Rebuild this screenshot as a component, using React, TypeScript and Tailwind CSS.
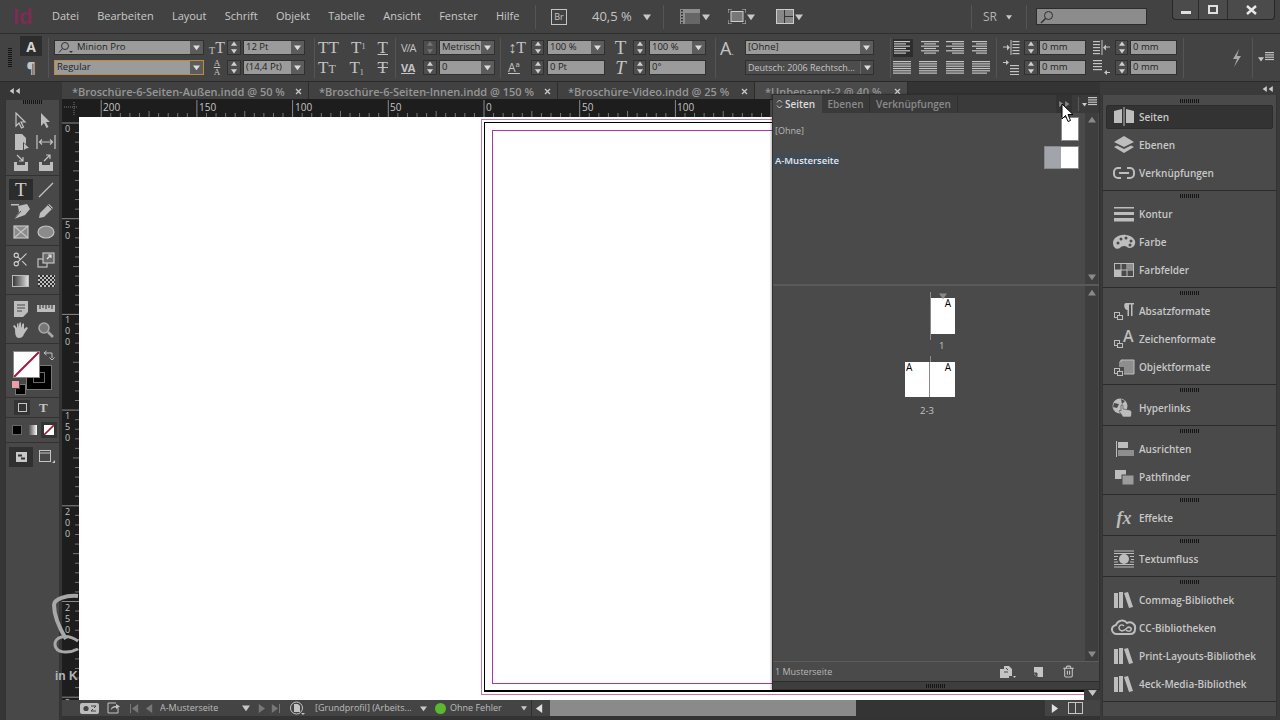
import React from "react";
import { Scissors, Trash2 } from "lucide-react";

const sans = { fontFamily: '"Open Sans", "Liberation Sans", sans-serif' };

type Dir = "up" | "down" | "left" | "right";

const Tri = ({ dir = "down", s = 7, c = "#c8c8c8" }: { dir?: Dir; s?: number; c?: string }) => {
  const pts = { up: "0,8 5,1 10,8", down: "0,2 10,2 5,9", left: "8,0 8,10 1,5", right: "2,0 2,10 9,5" }[dir];
  return (
    <svg width={s} height={s} viewBox="0 0 10 10" className="shrink-0">
      <polygon points={pts} fill={c} />
    </svg>
  );
};

const Grip = () => (
  <svg width="20" height="4" viewBox="0 0 20 4">
    {Array.from({ length: 10 }, (_, i) => (
      <rect key={i} x={i * 2} width="1" height="4" fill="#151515" />
    ))}
  </svg>
);

const Sep = ({ ml }: { ml: string }) => <div className={`${ml} w-px h-[40px] mt-[4px] bg-[#333333] border-r border-[#555555] shrink-0`} />;
const BarSep = ({ ml }: { ml: string }) => <div className={`${ml} w-px h-[24px] bg-[#2f2f2f] border-r border-[#555555] shrink-0`} />;

const Spinner = ({ w = "w-[14px]", dim = false }: { w?: string; dim?: boolean }) => (
  <div className={`${w} h-[15px] bg-[#4e4e4e] border border-[#303030] flex flex-col items-center justify-center gap-px shrink-0`}>
    <Tri dir="up" s={6} c={dim ? "#777777" : "#d0d0d0"} />
    <Tri dir="down" s={6} c={dim ? "#777777" : "#d0d0d0"} />
  </div>
);

const Field = ({ w, text, drop = true, tone = "plain" }: { w: string; text: string; drop?: boolean; tone?: "plain" | "dark" | "focus" }) => {
  const look = {
    plain: "bg-[#9b9b9b] border-[#303030] text-[#222222] text-[9.5px]",
    focus: "bg-[#9b9b9b] border-[#c08a3c] text-[#222222] text-[9.5px]",
    dark: "bg-[#4c4c4c] border-[#303030] text-[#c4c4c4] text-[9px]",
  }[tone];
  return (
    <div className={`${w} h-[15px] border flex items-center shrink-0 ${look}`}>
      <span className="flex-1 pl-[2px] whitespace-nowrap">{text}</span>
      {drop && (
        <span className={`w-[13px] h-full flex items-center justify-center shrink-0 ${tone === "dark" ? "bg-[#4c4c4c] border-l border-[#666666]" : "bg-[#5c5c5c]"}`}>
          <Tri s={7} c="#dddddd" />
        </span>
      )}
    </div>
  );
};

const Glyph = ({ children, size = "text-[17px]", className = "" }: { children: React.ReactNode; size?: string; className?: string }) => (
  <span className={`${size} leading-none text-[#c4c4c4] whitespace-nowrap ${className}`} style={{ fontFamily: '"Liberation Serif", serif' }}>
    {children}
  </span>
);

const Lines = ({ rows, w = 18 }: { rows: number[][]; w?: number }) => (
  <svg width={w} height="14" viewBox={`0 0 ${w} 14`} className="shrink-0">
    {rows.map(([a, b], i) => (
      <rect key={i} x={a} y={i * 2.3} width={b - a} height="1.2" fill="#c4c4c4" />
    ))}
  </svg>
);

const MenuBar = () => (
  <div className="h-[34px] shrink-0 bg-[#424242] flex items-center relative border-b border-[#2e2e2e]">
    <span className="ml-[13px] w-[39px] shrink-0 text-[22px] font-bold leading-none text-[#7c2c55]" style={{ fontFamily: '"Liberation Sans", sans-serif' }}>
      Id
    </span>
    <nav className="flex gap-[18.25px] text-[11px] text-[#c9c9c9] w-[483px] shrink-0">
      {["Datei", "Bearbeiten", "Layout", "Schrift", "Objekt", "Tabelle", "Ansicht", "Fenster", "Hilfe"].map((m) => (
        <span key={m}>{m}</span>
      ))}
    </nav>
    <BarSep ml="ml-0" />
    <div className="ml-[15px] w-[16px] h-[16px] shrink-0 border border-[#c4c4c4] text-[9px] flex items-center justify-center text-[#c4c4c4]">Br</div>
    <span className="ml-[25px] w-[40px] shrink-0 text-[13px] text-[#c4c4c4] whitespace-nowrap">40,5 %</span>
    <span className="ml-[11px]"><Tri s={8} /></span>
    <BarSep ml="ml-[12px]" />
    <svg width="20" height="15" viewBox="0 0 20 15" className="ml-[16px] shrink-0">
      <rect width="20" height="15" fill="#8e8e8e" />
      <rect x="5" y="4" width="15" height="11" fill="#666666" />
      {[1, 4, 7, 10, 13].map((y) => <rect key={y} x="1" y={y} width="2" height="1.5" fill="#333333" />)}
    </svg>
    <span className="ml-[2px]"><Tri s={8} /></span>
    <svg width="18" height="15" viewBox="0 0 18 15" className="ml-[18px] shrink-0">
      <path d="M0 4V0H4M14 0H18V4M18 11V15H14M4 15H0V11" stroke="#c4c4c4" fill="none" />
      <rect x="3" y="2.5" width="12" height="10" fill="#777777" stroke="#cccccc" />
    </svg>
    <span className="ml-[1px]"><Tri s={8} /></span>
    <svg width="18" height="15" viewBox="0 0 18 15" className="ml-[21px] shrink-0">
      <rect x=".5" y=".5" width="17" height="14" fill="#888888" stroke="#cccccc" />
      <path d="M8.5 1V14M9 7.5H17" stroke="#333333" />
    </svg>
    <span className="ml-[1px]"><Tri s={8} /></span>
    <BarSep ml="ml-[168px]" />
    <span className="ml-[11px] text-[12px] text-[#b4b4b4] w-[23px] shrink-0">SR</span>
    <Tri s={6} />
    <BarSep ml="ml-[14px]" />
    <div className="ml-[9px] w-[111px] h-[17px] shrink-0 bg-[#8c8c8c] border border-[#2c2c2c] flex items-center pl-[3px]">
      <svg width="14" height="14" viewBox="0 0 14 14">
        <circle cx="8.5" cy="5.5" r="4" fill="none" stroke="#2e2e2e" />
        <path d="M5.5 8.5L1 13" stroke="#2e2e2e" strokeWidth="1.4" />
      </svg>
    </div>
    <div className="ml-[25px] self-start h-[20px] flex shrink-0 bg-[#4b4b4b] border border-t-0 border-[#262626] rounded-b-[4px]">
      <div className="w-[26px] flex items-center justify-center border-r border-[#2c2c2c]"><div className="w-[10px] h-[3px] mt-[6px] bg-[#e0e0e0]" /></div>
      <div className="w-[29px] flex items-center justify-center border-r border-[#2c2c2c]"><div className="w-[10px] h-[9px] border-2 border-[#e0e0e0]" /></div>
      <div className="w-[46px] flex items-center justify-center">
        <svg width="11" height="10" viewBox="0 0 11 10"><path d="M1 1L10 9M10 1L1 9" stroke="#e8e8e8" strokeWidth="2.4" /></svg>
      </div>
    </div>
  </div>
);

const Row = ({ children }: { children: React.ReactNode }) => <div className="flex items-center h-[15px]">{children}</div>;
const Col = ({ children, className = "" }: { children: React.ReactNode; className?: string }) => (
  <div className={`flex flex-col gap-[5px] pt-[6px] shrink-0 ${className}`}>{children}</div>
);

const Indent = ({ kind }: { kind: "left" | "right" | "first" | "last" }) => (
  <svg width="17" height="15" viewBox="0 0 17 15" className="shrink-0" fill="#c4c4c4">
    {kind === "left" && <>
      <path d="M8 0V15" stroke="#c4c4c4" />
      {[1, 4, 7, 10, 13].map((y) => <rect key={y} x="9.5" y={y} width="7" height="1.2" />)}
      <path d="M0 7H5" stroke="#c4c4c4" /><polygon points="4,4.5 7,7.5 4,10.5" />
    </>}
    {kind === "right" && <>
      <path d="M9 0V15" stroke="#c4c4c4" />
      {[1, 4, 7, 10, 13].map((y) => <rect key={y} x="0" y={y} width="7" height="1.2" />)}
      <path d="M12 7H17" stroke="#c4c4c4" /><polygon points="13,4.5 10,7.5 13,10.5" />
    </>}
    {kind === "first" && <>
      {[5, 8, 11, 14].map((y) => <rect key={y} x="7" y={y} width="9" height="1.2" />)}
      <path d="M0 2.5H4" stroke="#c4c4c4" /><polygon points="3,0 6,2.5 3,5" />
    </>}
    {kind === "last" && <>
      {[0, 3, 6, 9].map((y) => <rect key={y} x="0" y={y} width="9" height="1.2" />)}
      <path d="M13 12.5H17" stroke="#c4c4c4" /><polygon points="14,10 11,12.5 14,15" />
    </>}
  </svg>
);

const ControlBar = () => (
  <div className="h-[48px] shrink-0 bg-[#434343] border-b border-[#2a2a2a] flex text-[#c4c4c4]" style={sans}>
    <div className="ml-[8px] w-[12px] shrink-0 pt-[14px]">
      <div className="w-[4px] h-[20px] bg-[repeating-linear-gradient(#151515_0_1px,transparent_1px_2px)]" />
    </div>
    <div className="w-[22px] shrink-0 pt-[2px] flex flex-col items-center">
      <div className="w-[22px] h-[20px] bg-[#2d2d2d] flex items-center justify-center text-[14px] font-bold text-[#d4d4d4]">A</div>
      <div className="mt-[3px] text-[14px] font-bold leading-none text-[#c4c4c4] pt-[2px]">¶</div>
    </div>
    <Sep ml="ml-[6px]" />
    <Col className="ml-[5px] w-[150px]">
      <div className="h-[15px] bg-[#9b9b9b] border border-[#303030] flex items-center text-[9.5px] text-[#222222]">
        <svg width="18" height="13" viewBox="0 0 18 13" className="ml-[2px]">
          <circle cx="8" cy="5" r="3.5" fill="none" stroke="#333333" />
          <path d="M5.5 7.5L2 11.5" stroke="#333333" />
          <polygon points="12,10 16,10 14,12" fill="#333333" />
        </svg>
        <span className="flex-1 pl-[2px]">Minion Pro</span>
        <span className="w-[13px] h-full bg-[#5c5c5c] flex items-center justify-center"><Tri s={7} c="#dddddd" /></span>
      </div>
      <Field w="w-[150px]" text="Regular" tone="focus" />
    </Col>
    <Col className="ml-[5px]">
      <Row><span className="w-[16px] flex justify-center items-end"><Glyph size="text-[10px]">T</Glyph><Glyph size="text-[16px]">T</Glyph></span><span className="ml-[2px]"><Spinner /></span><Field w="w-[62px] ml-[2px]" text="12 Pt" /></Row>
      <Row><span className="w-[16px] flex flex-col items-center"><Glyph size="text-[9px]" className="underline">A</Glyph><Glyph size="text-[9px]">A</Glyph></span><span className="ml-[2px]"><Spinner /></span><Field w="w-[62px] ml-[2px]" text="(14,4 Pt)" /></Row>
    </Col>
    <Sep ml="ml-[9px]" />
    <Col className="ml-[3px] w-[70px]">
      <Row><div className="flex justify-between w-full"><Glyph>TT</Glyph><Glyph>T<sup className="text-[8px]">1</sup></Glyph><Glyph className="underline">T</Glyph></div></Row>
      <Row><div className="flex justify-between w-full"><Glyph>T<span className="text-[12px]">T</span></Glyph><Glyph>T<sub className="text-[8px]">1</sub></Glyph><Glyph className="line-through">T</Glyph></div></Row>
    </Col>
    <Sep ml="ml-[7px]" />
    <Col className="ml-[5px]">
      <Row><span className="w-[18px] text-[11px] leading-none tracking-[-1px] whitespace-nowrap">V/A</span><span className="ml-[4px]"><Spinner dim /></span><Field w="w-[56px] ml-[2px]" text="Metrisch" /></Row>
      <Row><span className="w-[18px] text-[11px] font-bold leading-none underline tracking-[-0.5px]">VA</span><span className="ml-[4px]"><Spinner /></span><Field w="w-[56px] ml-[2px]" text="0" /></Row>
    </Col>
    <Sep ml="ml-[5px]" />
    <Col className="ml-[7px]">
      <Row>
        <span className="w-[18px] flex justify-end"><Glyph size="text-[16px]">↕T</Glyph></span><span className="ml-[5px]"><Spinner w="w-[13px]" /></span><Field w="w-[58px] ml-[3px]" text="100 %" />
        <span className="ml-[6px] w-[19px] flex justify-center"><Glyph size="text-[19px]">T</Glyph></span><span className="ml-[3px]"><Spinner w="w-[13px]" /></span><Field w="w-[57px] ml-[3px]" text="100 %" />
      </Row>
      <Row>
        <span className="w-[18px] text-[12px] leading-none underline">Aª</span><span className="ml-[5px]"><Spinner w="w-[13px]" /></span><Field w="w-[58px] ml-[3px]" text="0 Pt" drop={false} />
        <span className="ml-[6px] w-[19px] flex justify-center"><Glyph size="text-[19px]" className="italic">T</Glyph></span><span className="ml-[3px]"><Spinner w="w-[13px]" /></span><Field w="w-[57px] ml-[3px]" text="0°" drop={false} />
      </Row>
    </Col>
    <Sep ml="ml-[9px]" />
    <Col className="ml-[4px]">
      <Row><span className="w-[22px] text-[18px] leading-none">A<span className="text-[9px]">.</span></span><Field w="w-[129px] ml-[3px]" text="[Ohne]" /></Row>
      <Row><span className="w-[22px]" /><Field w="w-[129px] ml-[3px]" text="Deutsch: 2006 Rechtsch..." tone="dark" /></Row>
    </Col>
    <Sep ml="ml-[16px]" />
    <Col className="ml-[2px] w-[97px]">
      <Row>
        <div className="flex justify-between items-center w-full">
          <div className="bg-[#2d2d2d] px-[1px] py-[2px] -my-[2px]"><Lines rows={[[0, 16], [0, 12], [0, 16], [0, 12], [0, 16], [0, 12]]} /></div>
          <Lines rows={[[0, 18], [3, 15], [0, 18], [3, 15], [0, 18], [3, 15]]} />
          <Lines rows={[[0, 18], [6, 18], [0, 18], [6, 18], [0, 18], [6, 18]]} />
          <Lines rows={[[0, 15], [4, 15], [0, 15], [4, 15], [0, 15], [4, 15]]} />
        </div>
      </Row>
      <Row>
        <div className="flex justify-between items-center w-full">
          {[0, 1, 2, 3].map((i) => <Lines key={i} rows={[[0, 18], [0, 18], [0, 18], [0, 18], [0, 18], [0, i === 3 ? 15 : 18]]} />)}
        </div>
      </Row>
    </Col>
    <Sep ml="ml-[6px]" />
    <Col className="ml-[6px]">
      <Row><Indent kind="left" /><span className="ml-[4px]"><Spinner /></span><Field w="w-[47px] ml-[1px]" text="0 mm" drop={false} /><span className="ml-[7px]"><Indent kind="right" /></span><span className="ml-[5px]"><Spinner w="w-[13px]" /></span><Field w="w-[47px] ml-[2px]" text="0 mm" drop={false} /></Row>
      <Row><Indent kind="first" /><span className="ml-[4px]"><Spinner /></span><Field w="w-[47px] ml-[1px]" text="0 mm" drop={false} /><span className="ml-[7px]"><Indent kind="last" /></span><span className="ml-[5px]"><Spinner w="w-[13px]" /></span><Field w="w-[47px] ml-[2px]" text="0 mm" drop={false} /></Row>
    </Col>
    <Sep ml="ml-[6px]" />
    <svg width="12" height="20" viewBox="0 0 12 20" className="ml-[47px] mt-[14px] shrink-0">
      <path d="M8 1L2 11H6L3 19L10 8H6Z" fill="#a8a8a8" />
    </svg>
    <Sep ml="ml-[9px]" />
    <div className="ml-[5px] mt-[18px] flex items-center gap-[1px] shrink-0 h-[14px]">
      <Tri s={6} />
      <Lines w={9} rows={[[0, 9], [0, 9], [0, 9], [0, 9]]} />
    </div>
  </div>
);

const Tool = ({ children, active = false }: { children: React.ReactNode; active?: boolean }) => (
  <div className={`h-[21px] w-[24px] flex items-center justify-center ${active ? "bg-[#2c2c2c]" : ""}`}>{children}</div>
);

const ToolSvg = ({ children, filled = false }: { children: React.ReactNode; filled?: boolean }) => (
  <svg width="20" height="18" viewBox="0 0 20 18" fill={filled ? "#bdbdbd" : "none"} stroke={filled ? "none" : "#c4c4c4"} strokeWidth="1.2">
    {children}
  </svg>
);

const ToolGroup = ({ children, pb = "pb-[3px]" }: { children: React.ReactNode; pb?: string }) => (
  <div className={`grid grid-cols-2 justify-items-center pl-[2px] pt-[3px] ${pb} border-b border-[#323232]`}>{children}</div>
);

const ToolPanel = () => (
  <div className="w-[62px] shrink-0 h-full flex flex-col bg-[#363636]">
    <div className="h-[18px] flex items-center pl-[9px] gap-0">
      <Tri dir="left" s={6} /><Tri dir="left" s={6} />
    </div>
    <div className="flex-1 ml-[5px] w-[55px] bg-[#484848] border-x border-[#333333] flex flex-col">
      <div className="h-[7px] flex justify-center"><Grip /></div>
      <ToolGroup pb="pb-[2px]">
        <Tool><ToolSvg><path d="M5 1V14L8 11L10.5 16L12.5 15L10 10H14Z" /></ToolSvg></Tool>
        <Tool><ToolSvg filled><path d="M5 1V14L8 11L10.5 16L12.5 15L10 10H14Z" /></ToolSvg></Tool>
        <Tool><ToolSvg filled><path d="M4 1H11L15 5V11L12 9V17H4Z" /><path d="M13 10V17L15 15.5L18 15Z" /></ToolSvg></Tool>
        <Tool><ToolSvg><path d="M1 2V16M19 2V16" /><path d="M3.5 9H16.5M6 6.5L3.5 9L6 11.5M14 6.5L16.5 9L14 11.5" /></ToolSvg></Tool>
        <Tool><ToolSvg><path d="M3 8V17H17V8H14V11H6V8Z" fill="#bdbdbd" stroke="none" /><path d="M6 1L12 7M12 3V7H8" /></ToolSvg></Tool>
        <Tool><ToolSvg><path d="M3 8V17H17V8H14V11H6V8Z" fill="#bdbdbd" stroke="none" /><path d="M8 7L14 1M10 1H14V5" /></ToolSvg></Tool>
      </ToolGroup>
      <ToolGroup>
        <Tool active><Glyph size="text-[19px]" className="text-[#d0d0d0]">T</Glyph></Tool>
        <Tool><ToolSvg><path d="M3 16L17 2" /></ToolSvg></Tool>
        <Tool><ToolSvg filled><path d="M0 2H8V3.5H0Z" /><path d="M7 4L16 2L19 7L14 13L3 17L8 10Z" /><path d="M3 17L10 9" stroke="#484848" fill="none" strokeWidth="1" /></ToolSvg></Tool>
        <Tool><ToolSvg filled><path d="M13 2L17 6L8 15L3 16L4 11Z" /><path d="M12 3L16 7" stroke="#484848" fill="none" strokeWidth="1" /></ToolSvg></Tool>
        <Tool><ToolSvg><rect x="3" y="3" width="14" height="12" fill="#8b8b8b" /><path d="M3 3L17 15M17 3L3 15" /></ToolSvg></Tool>
        <Tool><ToolSvg filled><ellipse cx="10" cy="9" rx="8" ry="6" fill="#8b8b8b" stroke="#c4c4c4" /></ToolSvg></Tool>
      </ToolGroup>
      <ToolGroup>
        <Tool><Scissors size={17} color="#d0d0d0" strokeWidth={1.5} /></Tool>
        <Tool><ToolSvg><rect x="2" y="8" width="9" height="8" /><rect x="7" y="2" width="11" height="10" fill="#6a6a6a" /><path d="M11 8L15 4M12 4H15V7" stroke="#e0e0e0" /></ToolSvg></Tool>
        <Tool><div className="w-[17px] h-[12px] border border-[#bbbbbb] bg-gradient-to-r from-[#3a3a3a] to-[#e0e0e0]" /></Tool>
        <Tool><div className="w-[17px] h-[12px] bg-[conic-gradient(#2f2f2f_25%,#bdbdbd_0_50%,#2f2f2f_0_75%,#bdbdbd_0)] bg-[length:4px_4px]" /></Tool>
      </ToolGroup>
      <ToolGroup>
        <Tool><ToolSvg filled><path d="M3 1H17V12L12 17H3Z" /><path d="M6 5H14M6 8H14M6 11H11" stroke="#484848" fill="none" strokeWidth="1.2" /></ToolSvg></Tool>
        <Tool><ToolSvg filled><path d="M1 5H19V12H1Z" /><path d="M4 5V9M7 5V8M10 5V9M13 5V8M16 5V9" stroke="#484848" fill="none" /></ToolSvg></Tool>
        <Tool><ToolSvg filled><path d="M4 8L2 5L3.5 4L6 7V2.5H7.5V7L8.5 1.5H10V7L11.5 2.5H13V8L15.5 6L17 7L13 13C12 16 10 17 8 17C5 17 4 14 4 8Z" /></ToolSvg></Tool>
        <Tool><ToolSvg><circle cx="8" cy="7" r="5" fill="#777777" stroke="#a8a8a8" strokeWidth="1.6" /><path d="M12 11L17 16" stroke="#a8a8a8" strokeWidth="2.6" /></ToolSvg></Tool>
      </ToolGroup>
      <div className="h-[54px] relative border-b border-[#323232]">
        <div className="absolute left-[20px] top-[21px] w-[26px] h-[25px] bg-black border border-[#777777] flex items-center justify-center">
          <div className="w-[12px] h-[11px] border border-[#6a6a6a]" />
        </div>
        <div className="absolute left-[7px] top-[7px] w-[27px] h-[27px] border-[1px] border-[#888888] bg-white overflow-hidden">
          <svg width="25" height="25" viewBox="0 0 25 25"><path d="M0 25L25 0" stroke="#a01c3c" strokeWidth="2" /></svg>
        </div>
        <svg width="12" height="12" viewBox="0 0 12 12" className="absolute left-[37px] top-[6px]">
          <path d="M1 3H9V8M1 3L3.5 1M1 3L3.5 5M9 10L6.5 7.5M9 10L11.5 7.5" stroke="#c4c4c4" fill="none" />
        </svg>
        <div className="absolute left-[9px] top-[40px] w-[11px] h-[11px] bg-black border border-[#777777]" />
        <div className="absolute left-[5px] top-[36px] w-[9px] h-[9px] bg-[#e8a0a8] border border-[#444444]" />
      </div>
      <div className="h-[20px] flex items-center border-b border-[#323232]">
        <div className="ml-[8px] w-[16px] h-[15px] bg-[#343434] flex items-center justify-center"><div className="w-[9px] h-[9px] border border-[#c4c4c4]" /></div>
        <span className="ml-[9px] text-[13px] font-bold text-[#c4c4c4]" style={{ fontFamily: '"Liberation Serif", serif' }}>T</span>
      </div>
      <div className="h-[25px] flex items-center border-b border-[#323232]">
        <div className="ml-[6px] w-[10px] h-[10px] bg-black border border-[#666666]" />
        <div className="ml-[7px] w-[8px] h-[10px] bg-gradient-to-r from-[#555555] to-white" />
        <div className="ml-[4px] w-[16px] h-[16px] bg-[#343434] flex items-center justify-center">
          <div className="w-[10px] h-[10px] bg-white overflow-hidden">
            <svg width="10" height="10" viewBox="0 0 10 10"><path d="M0 10L10 0" stroke="#a01c3c" strokeWidth="1.6" /></svg>
          </div>
        </div>
      </div>
      <div className="mt-[4px] h-[20px] flex items-center">
        <div className="ml-[3px] w-[24px] h-[20px] bg-[#303030] flex items-center justify-center">
          <svg width="11" height="10" viewBox="0 0 11 10"><rect width="11" height="10" fill="#c8c8c8" /><rect x="2" y="2.5" width="4" height="2" fill="#333333" /><rect x="5" y="5.5" width="4" height="2" fill="#333333" /></svg>
        </div>
        <svg width="16" height="14" viewBox="0 0 16 14" className="ml-[6px]"><rect x=".5" y=".5" width="11" height="11" fill="none" stroke="#c4c4c4" /><path d="M1 3H11" stroke="#c4c4c4" /><polygon points="13,13 16,13 16,10" fill="#c4c4c4" /></svg>
      </div>
    </div>
  </div>
);

const tabs = [
  { t: "*Broschüre-6-Seiten-Außen.indd @ 50 %", w: "w-[247px]" },
  { t: "*Broschüre-6-Seiten-Innen.indd @ 150 %", w: "w-[249px]" },
  { t: "*Broschüre-Video.indd @ 25 %", w: "w-[197px]" },
  { t: "*Unbenannt-2 @ 40 %", w: "w-[153px]" },
];

const TabBar = () => (
  <div className="h-[18px] shrink-0 flex bg-[#343434] border-b border-[#1e1e1e]">
    {tabs.map((tab, i) => (
      <div key={tab.t} className={`${tab.w} flex items-center justify-between pt-[2px] pl-[10px] pr-[6px] border-r border-[#2c2c2c] ${i === 3 ? "bg-[#4a4a4a]" : "bg-[#414141]"}`}>
        <span className="text-[11px] font-semibold text-[#969696] whitespace-nowrap leading-none">{tab.t}</span>
        <svg width="7" height="7" viewBox="0 0 7 7"><path d="M1 1L6 6M6 1L1 6" stroke="#c8c8c8" strokeWidth="1.3" /></svg>
      </div>
    ))}
  </div>
);

const STEP = 95.7 / 10;

const HRuler = () => (
  <svg width="1005" height="17" viewBox="0 0 1005 17" className="block shrink-0">
    <rect width="1005" height="17" fill="#1d1d1d" />
    {Array.from({ length: 105 }, (_, i) => {
      const x = 405 + (i - 40) * STEP;
      const major = (i - 40) % 10 === 0;
      const mid = (i - 40) % 5 === 0;
      return <line key={i} x1={x} x2={x} y1={major ? 0 : mid ? 11 : 13} y2={17} stroke={major ? "#8a8a8a" : "#777777"} />;
    })}
    {[
      [23, "200"], [119, "150"], [215, "100"], [310, "50"], [406, "0"], [502, "50"], [597, "100"],
    ].map(([x, l]) => (
      <text key={String(x)} x={Number(x) + 1} y="11" fontSize="10" fill="#c4c4c4" fontFamily="Open Sans, sans-serif">{l}</text>
    ))}
  </svg>
);

const VRuler = () => (
  <svg width="17" height="583" viewBox="0 0 17 583" className="block shrink-0">
    <rect width="17" height="583" fill="#1d1d1d" />
    {Array.from({ length: 61 }, (_, i) => {
      const y = 6 + i * STEP;
      const major = i % 10 === 0;
      const mid = i % 5 === 0;
      return <line key={i} y1={y} y2={y} x1={major ? 0 : mid ? 11 : 13} x2={17} stroke={major ? "#8a8a8a" : "#777777"} />;
    })}
    {["0", "50", "100", "150", "200", "250", "300"].map((l, i) =>
      l.split("").map((d, k) => (
        <text key={l + k} x="3" y={15 + i * 95.7 + k * 11} fontSize="9" fill="#c4c4c4" fontFamily="Open Sans, sans-serif">{d}</text>
      ))
    )}
  </svg>
);

const Canvas = () => (
  <div className="flex-1 min-w-0 bg-white overflow-hidden pt-[2px] pl-[402px]">
    <div className="w-[800px] h-[576px] border border-[#c478a8] p-[2px]">
      <div className="w-full h-[570px] border border-black border-b-2 p-[7px]">
        <div className="w-full h-[554px] border border-[#a838a8]" />
      </div>
    </div>
  </div>
);

const VScroll = () => (
  <div className="w-[16px] shrink-0 bg-[#3c3c3c] flex flex-col items-center justify-end pb-[3px]">
    <Tri s={9} />
  </div>
);

const StatusBar = () => (
  <div className="h-[16px] shrink-0 bg-[#444444] flex items-center text-[9px] text-[#bdbdbd]">
    <svg width="19" height="11" viewBox="0 0 19 11" className="ml-[18px] shrink-0">
      <rect width="19" height="11" rx="2" fill="#bdbdbd" />
      <circle cx="6" cy="5.5" r="2.6" fill="#444444" />
      <path d="M11 3H16L14 5M16 8H11L13 6" stroke="#444444" fill="none" />
    </svg>
    <svg width="13" height="12" viewBox="0 0 13 12" className="ml-[8px] shrink-0">
      <path d="M9 1H1V11H11V6" stroke="#c4c4c4" fill="none" />
      <path d="M4 8C4 5 6 4 9 4V2L13 4.5L9 7V5.5C7 5.5 5 6 4 8Z" fill="#c4c4c4" />
    </svg>
    <span className="ml-[10px] flex items-center"><span className="w-px h-[9px] bg-[#777777]" /><Tri dir="left" s={9} c="#777777" /></span>
    <span className="ml-[5px]"><Tri dir="left" s={9} c="#777777" /></span>
    <span className="ml-[6px] w-[82px] whitespace-nowrap shrink-0">A-Musterseite</span>
    <Tri s={8} />
    <span className="ml-[7px]"><Tri dir="right" s={9} c="#777777" /></span>
    <span className="ml-[4px] flex items-center"><Tri dir="right" s={9} c="#777777" /><span className="w-px h-[9px] bg-[#777777]" /></span>
    <svg width="15" height="14" viewBox="0 0 15 14" className="ml-[10px] shrink-0">
      <circle cx="6.5" cy="7" r="6" fill="none" stroke="#c4c4c4" />
      <path d="M4 3H8L10 5V11H4Z" fill="#c4c4c4" />
      <polygon points="11,12 15,12 13,14" fill="#c4c4c4" />
    </svg>
    <span className="ml-[10px] w-[105px] whitespace-nowrap shrink-0">[Grundprofil] (Arbeits...</span>
    <Tri s={7} />
    <span className="ml-[8px] w-[11px] h-[11px] rounded-full bg-[#5cb82e] shrink-0" />
    <span className="ml-[4px] w-[71px] whitespace-nowrap shrink-0">Ohne Fehler</span>
    <Tri s={6} />
    <div className="ml-[4px] h-full flex-1 flex items-center border-l border-[#2e2e2e]">
      <span className="w-[18px] pl-[3px] flex"><Tri dir="left" s={9} c="#e0e0e0" /></span>
      <div className="w-[306px] h-full bg-[#8a8a8a]" />
      <div className="w-[189px] h-full bg-[#343434]" />
      <span className="w-[19px] flex justify-center"><Tri dir="right" s={9} c="#e0e0e0" /></span>
      <div className="ml-[4px] w-[15px] h-[12px] border border-[#c4c4c4] flex"><div className="w-1/2 h-full border-r border-[#c4c4c4]" /></div>
    </div>
    <div className="w-[18px]" />
  </div>
);

const PanelScroll = () => (
  <div className="w-[13px] h-full bg-[#3e3e3e] flex flex-col items-center justify-between py-[3px] shrink-0">
    <Tri dir="up" s={8} c="#8a8a8a" />
    <Tri s={8} c="#8a8a8a" />
  </div>
);

const PagesPanel = () => (
  <div className="absolute left-[710px] top-[12px] w-[328px] h-[596px] bg-[#4a4a4a] border border-[#303030] flex flex-col shadow-[-1px_0_2px_rgba(0,0,0,0.3)]">
    <div className="h-[18px] shrink-0 bg-[#3a3a3a] flex items-stretch text-[10px] font-semibold text-[#8a8a8a]">
      <div className="w-[49px] bg-[#4a4a4a] flex items-center pl-[3px] text-[#dcdcdc]">
        <svg width="7" height="10" viewBox="0 0 7 10" className="mr-[2px]"><path d="M1 3.5L3.5 1L6 3.5M1 6.5L3.5 9L6 6.5" stroke="#c8c8c8" fill="none" /></svg>
        Seiten
      </div>
      <div className="w-[48px] flex items-center justify-center border-r border-[#2e2e2e]">Ebenen</div>
      <div className="w-[88px] flex items-center justify-center border-r border-[#2e2e2e]">Verknüpfungen</div>
      <div className="flex-1" />
      <div className="w-[16px] bg-[#333333] flex items-center justify-center"><Tri dir="right" s={6} c="#8a8a8a" /><Tri dir="right" s={6} c="#8a8a8a" /></div>
      <div className="ml-[6px] w-px my-[2px] bg-[#5a5a5a]" />
      <div className="w-[20px] flex items-center justify-center gap-[1px]"><Tri s={5} /><Lines w={9} rows={[[0, 9], [0, 9], [0, 9], [0, 9]]} /></div>
    </div>
    <div className="h-[173px] shrink-0 flex border-b-2 border-[#5a5a5a]">
      <div className="flex-1 relative pt-[4px] pl-[2px] pr-[6px]">
        <div className="h-[23px] flex items-start justify-end">
          <div className="w-[18px] h-[24px] bg-white border border-[#888888]" />
        </div>
        <div className="mt-[6px] flex items-center justify-end h-[23px]">
          <div className="w-[17px] h-[23px] bg-[#a2a4ac] border border-[#888888] border-r-0" />
          <div className="w-[18px] h-[23px] bg-white border border-[#888888] border-l-0" />
        </div>
        <span className="absolute left-[2px] top-[13px] text-[9px] text-[#b8b8b8] leading-none">[Ohne]</span>
        <span className="absolute left-[1px] top-[41px] text-[9.5px] font-semibold text-[#e8e8e8] bg-[#3f4c58] leading-[13px] px-[1px]">A-Musterseite</span>
      </div>
      <div className="flex items-stretch pr-[1px]"><PanelScroll /></div>
    </div>
    <div className="flex-1 min-h-0 flex">
      <div className="flex-1 text-[9.5px] text-[#c4c4c4]">
        <div className="ml-[157px] mt-[6px] w-[25px] h-[6px] flex justify-center border-l border-[#8a8a8a]"><Tri s={8} c="#8a8a8a" /></div>
        <div className="ml-[157px] w-[25px] h-[36px] bg-white border-l border-[#8a8a8a] text-[10px] font-medium text-black text-right pr-[4px] leading-[11px]">A</div>
        <div className="ml-[157px] w-px h-[6px] bg-[#8a8a8a]" />
        <div className="ml-[166px] leading-[12px]">1</div>
        <div className="ml-[157px] mt-[4px] w-px h-[6px] bg-[#8a8a8a]" />
        <div className="ml-[132px] w-[50px] h-[35px] flex bg-white text-[10px] font-medium text-black leading-[11px]">
          <div className="w-[25px] pl-[1px] border-r border-[#8a8a8a]">A</div>
          <div className="w-[25px] text-right pr-[4px]">A</div>
        </div>
        <div className="ml-[147px] mt-[9px] leading-none">2-3</div>
      </div>
      <div className="flex pr-[1px]"><PanelScroll /></div>
    </div>
    <div className="h-[20px] shrink-0 border-t border-[#5c5c5c] flex items-center pl-[2px] text-[9px] text-[#b8b8b8]">
      <span className="flex-1">1 Musterseite</span>
      <svg width="17" height="14" viewBox="0 0 17 14" className="mr-[17px]">
        <path d="M1 4H5V1H10L13 4V11H10V13H1Z" fill="#c4c4c4" />
        <path d="M7 3L9 5M5 7H9" stroke="#4a4a4a" />
        <polygon points="14,11 17,11 15.5,13" fill="#c4c4c4" />
      </svg>
      <svg width="11" height="12" viewBox="0 0 11 12" className="mr-[18px]"><path d="M1 1H10V11H4L1 8Z" fill="#c4c4c4" /><path d="M1 7H4V11" fill="#4a4a4a" stroke="#4a4a4a" /></svg>
      <Trash2 size={13} color="#c4c4c4" className="mr-[24px]" />
    </div>
    <div className="h-[8px] shrink-0 bg-[#3e3e3e] border-t border-[#2c2c2c] flex justify-center items-center"><Grip /></div>
  </div>
);

const I = ({ children }: { children: React.ReactNode }) => (
  <svg width="26" height="20" viewBox="0 0 26 20" fill="#bdbdbd" className="shrink-0">
    {children}
  </svg>
);

const Books = () => (
  <I>
    <rect x="3" y="3" width="4" height="15" />
    <rect x="8" y="2" width="4" height="16" />
    <path d="M13 3L17 2L22 17L18 18Z" />
  </I>
);

const StyleBase = () => (
  <g fill="none" stroke="#bdbdbd">
    <rect x="3.5" y="11.5" width="5" height="5" />
    <rect x="6.5" y="14.5" width="5" height="4" fill="#4a4a4a" />
  </g>
);

const dock = [
  [
    { n: "Seiten", active: true, i: <I><path d="M3 4L11 2V16H3Z" /><path d="M15 2L23 4V16H15Z" /><rect x="12.5" y="0" width="1" height="19" /></I> },
    { n: "Ebenen", i: <I><path d="M13 1L23 7L13 12L3 7Z" /><path d="M6 10.5L13 14L20 10.5L23 12L13 18L3 12Z" /></I> },
    { n: "Verknüpfungen", i: <I><g fill="none" stroke="#bdbdbd" strokeWidth="2"><path d="M10 5H7A4 4 0 0 0 3 9V11A4 4 0 0 0 7 15H10" /><path d="M16 5H19A4 4 0 0 1 23 9V11A4 4 0 0 1 19 15H16" /><path d="M8 10H18" /></g></I> },
  ],
  [
    { n: "Kontur", i: <I><rect x="3" y="3" width="20" height="1.5" /><rect x="3" y="8" width="20" height="3" /><rect x="3" y="14" width="20" height="3.5" /></I> },
    { n: "Farbe", i: <I><path d="M2 11C2 6 8 2 15 3C22 4 25 8 24 12C23 16 18 17 16 15C14 13 10 14 9 16C6 18 2 16 2 11Z" /><g fill="#4a4a4a"><circle cx="7" cy="11" r="1.5" /><circle cx="10" cy="7" r="1.5" /><circle cx="15" cy="6" r="1.5" /><circle cx="20" cy="9" r="1.5" /><circle cx="19" cy="13" r="1.5" /></g></I> },
    { n: "Farbfelder", i: <I><rect x="3.5" y="3.5" width="19" height="13" fill="none" stroke="#bdbdbd" /><path d="M10 4V16M16 4V16M4 10H22" stroke="#bdbdbd" /><rect x="4" y="10" width="6" height="6" /><rect x="16" y="4" width="6" height="6" fill="#8e8e8e" /></I> },
  ],
  [
    { n: "Absatzformate", i: <I><StyleBase /><path d="M15 2H23V3.5H21.5V15H20V3.5H18V15H16.5V9C13 9 12 2 15 2Z" /></I> },
    { n: "Zeichenformate", i: <I><StyleBase /><text x="12" y="13" fontSize="16" fill="#bdbdbd" fontFamily="Open Sans, sans-serif">A</text></I> },
    { n: "Objektformate", i: <I><StyleBase /><path d="M10 3H23V17H13V10H8V5Z" fill="#8e8e8e" /><path d="M10 5V3H23V17H13" fill="none" stroke="#bdbdbd" /></I> },
  ],
  [{ n: "Hyperlinks", i: <I><circle cx="9" cy="8" r="7.5" /><path d="M3 5L8 6L6 10L2 9M10 1L14 3L11 6Z" fill="#4a4a4a" /><path d="M10 7H12V11L19 12C21 13 21 15 20 19H12L8 13L9 12L10 13Z" stroke="#4a4a4a" strokeWidth=".6" /></I> }],
  [
    { n: "Ausrichten", i: <I><rect x="5" y="2" width="1" height="16" /><rect x="7" y="3" width="10" height="6" /><rect x="7" y="11" width="16" height="6" fill="#8e8e8e" /></I> },
    { n: "Pathfinder", i: <I><rect x="4" y="3" width="11" height="9" /><rect x="11" y="8" width="12" height="10" fill="#9c9c9c" stroke="#4a4a4a" /></I> },
  ],
  [{ n: "Effekte", i: <span className="w-[26px] text-center text-[18px] italic leading-none text-[#bdbdbd] shrink-0" style={{ fontFamily: '"Liberation Serif", serif' }}>fx</span> }],
  [{ n: "Textumfluss", i: <I><path d="M3 2H23M3 4.5H23M3 15.5H23M3 18H23M3 7.5H7M19 7.5H23M3 10.5H6M20 10.5H23M3 13H7M19 13H23" stroke="#bdbdbd" /><circle cx="13" cy="10" r="5" /></I> }],
  [
    { n: "Commag-Bibliothek", i: <Books /> },
    { n: "CC-Bibliotheken", i: <I><path d="M6 16A4.5 4.5 0 0 1 5 7C7 2 13 1 16 5C20 3 25 6 24 11C24 14 22 16 19 16Z" fill="none" stroke="#bdbdbd" strokeWidth="2" /><path d="M13 8C10 5 6 9 9 12C11 14 14 12 16 10C18 8 21 10 20 12C19 14 16 13 15 12" fill="none" stroke="#bdbdbd" strokeWidth="1.5" /></I> },
    { n: "Print-Layouts-Bibliothek", i: <Books /> },
    { n: "4eck-Media-Bibliothek", i: <Books /> },
  ],
];

const Dock = () => (
  <div className="w-[180px] shrink-0 h-full flex flex-col bg-[#3a3a3a]" style={sans}>
    <div className="h-[13px] shrink-0 flex items-center justify-end pr-[6px]"><Tri dir="left" s={6} /><Tri dir="left" s={6} /></div>
    <div className="ml-[2px] w-[175px] bg-[#4a4a4a] border-x border-[#333333]">
      {dock.map((group, gi) => (
        <div key={gi} className={`pb-[3px] ${gi > 0 ? "border-t border-[#2a2a2a]" : "pt-px"}`}>
          <div className="h-[9px] flex justify-center items-center"><Grip /></div>
          {group.map((item: { n: string; i: React.ReactNode; active?: boolean }) => (
            <div key={item.n} className={`flex items-center text-[10px] font-semibold text-[#c8c8c8] ${item.active ? "ml-[3px] mr-[3px] pl-[4px] h-[24px] mb-[2px] rounded-[2px] bg-[#333333] border border-[#2c2c2c]" : "h-[28px] pl-[8px]"}`}>
              {item.i}
              <span className="ml-[2px] whitespace-nowrap">{item.n}</span>
            </div>
          ))}
        </div>
      ))}
      <div className="h-[15px] border-t border-[#2a2a2a]" />
    </div>
  </div>
);

const Cursor = () => (
  <svg width="13" height="20" viewBox="0 0 13 20" className="absolute left-[1061px] top-[103px]">
    <path d="M1 1V16L4.5 12.5L7 18.5L9.5 17.5L7 11.5H12Z" fill="white" stroke="black" />
  </svg>
);

const Watermark = () => (
  <div className="absolute left-[52px] top-[593px] w-[30px] h-[95px] text-[#b4b4b4]">
    <svg width="30" height="64" viewBox="0 0 30 64" fill="none">
      <path d="M26 3C14 2 2 6 2 12C2 24 8 36 14 46" stroke="#a8a8a8" strokeWidth="4" />
      <path d="M26 48C14 40 2 44 3 52C4 60 16 61 26 56" stroke="#a8a8a8" strokeWidth="3" />
    </svg>
    <span className="absolute left-[3px] top-[77px] text-[12px] font-bold whitespace-nowrap leading-none" style={{ fontFamily: '"Liberation Sans", sans-serif' }}>in K</span>
  </div>
);

export default function App() {
  return (
    <div className="w-[1280px] h-[720px] flex flex-col overflow-hidden bg-[#333333] relative" style={sans}>
      <MenuBar />
      <ControlBar />
      <div className="flex-1 min-h-0 flex">
        <ToolPanel />
        <div className="w-[1038px] shrink-0 flex flex-col relative">
          <TabBar />
          <div className="flex shrink-0">
            <svg width="17" height="17" viewBox="0 0 17 17" className="block shrink-0">
              <rect width="17" height="17" fill="#1d1d1d" />
              <path d="M12 2V16M2 7H16" stroke="#777777" strokeDasharray="1 1" />
            </svg>
            <HRuler />
            <div className="w-[16px] bg-[#3c3c3c]" />
          </div>
          <div className="flex h-[583px] shrink-0">
            <VRuler />
            <Canvas />
            <VScroll />
          </div>
          <StatusBar />
          <PagesPanel />
        </div>
        <Dock />
      </div>
      <Watermark />
      <Cursor />
    </div>
  );
}
